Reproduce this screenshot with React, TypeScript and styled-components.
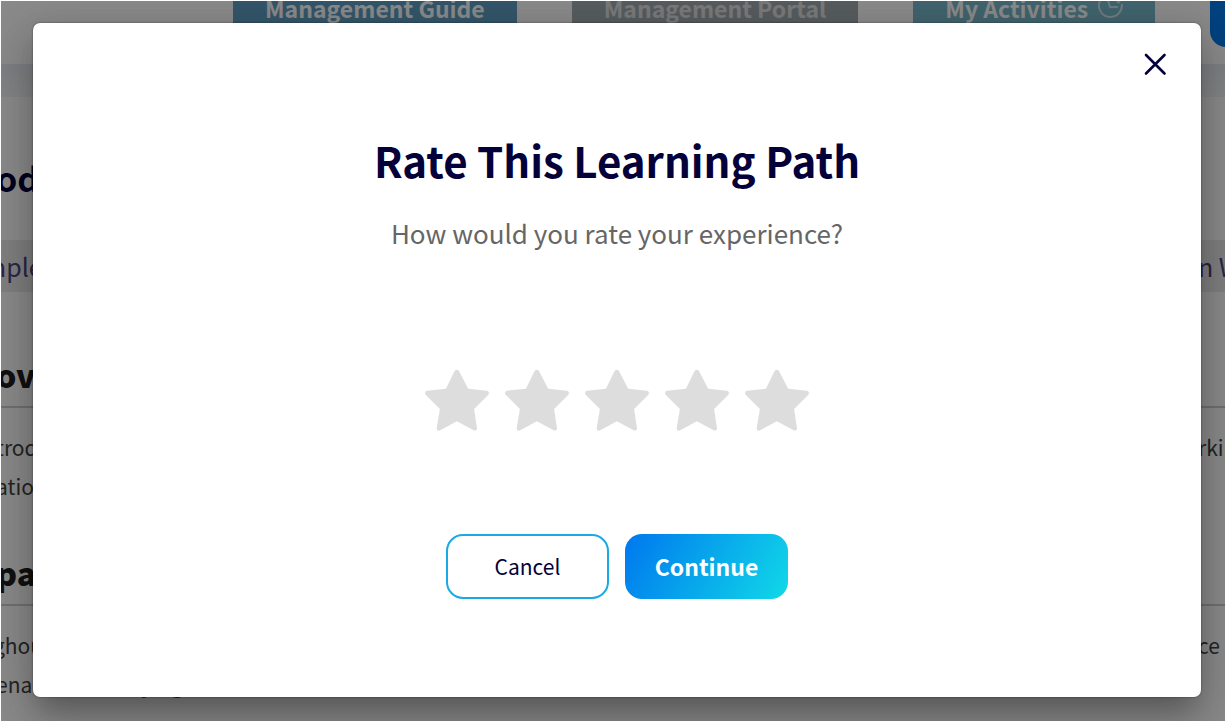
import React, { useState } from "react";
import styled, { createGlobalStyle } from "styled-components";

const GlobalStyle = createGlobalStyle`
  *, *::before, *::after { box-sizing: border-box; }
  body {
    margin: 0;
    background: #fff;
    font-family: "Noto Sans CJK SC", "Open Sans", sans-serif;
  }
  button { font-family: inherit; border: 0; cursor: pointer; }
  h1, h2, p { margin: 0; }
`;

const Frame = styled.div`
  height: 100vh;
  padding: 1px;
`;

const Screen = styled.div`
  position: relative;
  height: 100%;
  overflow: hidden;
  background: #fff;
`;

const Header = styled.header`
  display: flex;
  align-items: flex-end;
  gap: 55px;
  height: 63px;
  padding: 0 0 17px 232px;
  overflow: hidden;
`;

const NavButton = styled.button<{ $bg: string; $fg?: string; $round?: boolean }>`
  flex: none;
  display: flex;
  align-items: center;
  gap: 10px;
  height: 76px;
  padding: 0 32px 2px;
  border-radius: ${(p) => (p.$round ? "16px" : "0")};
  background: ${(p) => p.$bg};
  color: ${(p) => p.$fg ?? "#fff"};
  font-size: 23px;
  font-weight: 700;
  line-height: 36px;
  white-space: nowrap;
`;

const Band = styled.div`
  height: 33px;
  background: linear-gradient(#e6ecf2, #f2f5f5);
`;

const CourseTitle = styled.div`
  display: flex;
  align-items: center;
  height: 143px;
  padding-top: 18px;
  color: #03003a;
  font-size: 34px;
  font-weight: 700;
  line-height: 48px;
`;

const Tabs = styled.div`
  display: flex;
  align-items: center;
  justify-content: space-between;
  height: 52px;
  margin-bottom: 60px;
  background: #eaeaea;
  color: #4c4880;
  font-size: 25px;
  line-height: 40px;
`;

const Section = styled.section`
  height: 198px;
`;

const SectionTitle = styled.h2`
  display: flex;
  height: 56px;
  border-bottom: 2px solid #cfcfcf;
  color: #202020;
  font-size: 32px;
  font-weight: 900;
  line-height: 44px;
`;

const Copy = styled.div`
  padding-top: 20px;
  color: #444;
  font-size: 21px;
  line-height: 39px;
`;

const Line = styled.p`
  display: flex;
  justify-content: space-between;
`;

/* Text running past the left edge of the window. */
const Leading = styled.span<{ $shift: number }>`
  margin-left: -${(p) => p.$shift}px;
  white-space: nowrap;
`;

/* Text running past the right edge of the window. */
const Trailing = styled.span`
  width: 27px;
  overflow: hidden;
  white-space: nowrap;
`;

const Backdrop = styled.div`
  position: absolute;
  inset: 0;
  display: flex;
  padding: 22px 24px 24px 32px;
  background: rgba(0, 0, 0, 0.46);
`;

const Dialog = styled.div`
  position: relative;
  flex: 1;
  display: flex;
  flex-direction: column;
  align-items: center;
  padding-top: 107px;
  border-radius: 7px;
  background: #fff;
  box-shadow: 0 0 2px rgba(0, 0, 0, 0.5), 0 18px 24px -11px rgba(0, 0, 0, 0.2),
    0 24px 38px 3px rgba(0, 0, 0, 0.14), 0 9px 46px 8px rgba(0, 0, 0, 0.12);
`;

const CloseButton = styled.button`
  position: absolute;
  top: 25px;
  right: 30px;
  display: flex;
  padding: 4px;
  background: none;
  color: #03003a;
`;

const DialogTitle = styled.h1`
  color: #03003a;
  font-size: 42px;
  font-weight: 700;
  line-height: 60px;
`;

const Question = styled.p`
  margin-top: 23px;
  color: #666;
  font-size: 26px;
  line-height: 40px;
`;

const Stars = styled.fieldset`
  display: flex;
  gap: 16px;
  margin: 116px 0 0;
  padding: 0;
  border: 0;
`;

const StarLabel = styled.label<{ $on: boolean }>`
  position: relative;
  display: flex;
  color: ${(p) => (p.$on ? "#f5b301" : "#dddddd")};
  cursor: pointer;
`;

const StarInput = styled.input`
  position: absolute;
  inset: 0;
  margin: 0;
  opacity: 0;
`;

const Actions = styled.div`
  display: flex;
  gap: 16px;
  margin-top: 102px;
`;

const ActionButton = styled.button<{ $primary?: boolean }>`
  width: 163px;
  height: 65px;
  padding: 0 0 2px;
  border-radius: 17px;
  border: ${(p) => (p.$primary ? "0" : "2px solid #1ba9e6")};
  background: ${(p) =>
    p.$primary ? "linear-gradient(120deg, #007cee 5%, #10d5e8 96%)" : "#fff"};
  color: ${(p) => (p.$primary ? "#fff" : "#03003a")};
  font-size: ${(p) => (p.$primary ? "23px" : "21px")};
  font-weight: ${(p) => (p.$primary ? 700 : 400)};
  line-height: 36px;
`;

const ClockIcon = () => (
  <svg width="25" height="32" viewBox="0 0 25 32" fill="none" stroke="currentColor" strokeWidth="2" opacity="0.6" aria-hidden="true">
    <path d="M16.5 2.7A11.5 11.5 0 1 0 23.8 12" />
    <path d="M9 5l3 10h8" />
    <circle cx="20.5" cy="9.5" r="2" fill="currentColor" stroke="none" />
  </svg>
);

const StarIcon = () => (
  <svg width="64" height="63" viewBox="0 0 193 187" fill="currentColor" aria-hidden="true">
    <path d="M89 5Q96-3 103 5L130 58L187 64Q196 67 191 76L148 119L157 178Q156 186 148 184L96 156L45 184Q36 187 35 178L45 119L2 76Q-3 67 6 64L63 58Z" />
  </svg>
);

export default function App() {
  const [rating, setRating] = useState(0);
  return (
    <Frame>
      <GlobalStyle />
      <Screen>
        <Header>
          <NavButton $bg="#609fc4">Management Guide</NavButton>
          <NavButton $bg="#a1acb0" $fg="#e2e2e2">Management Portal</NavButton>
          <NavButton $bg="#78b9cc">
            My Activities
            <ClockIcon />
          </NavButton>
          <NavButton $bg="#007aeb" $round aria-label="Account" />
        </Header>
        <Band />
        <CourseTitle>
          <Leading $shift={5}>od</Leading>
        </CourseTitle>
        <Tabs>
          <Leading $shift={18}>mple</Leading>
          <Trailing>n W</Trailing>
        </Tabs>
        <Section>
          <SectionTitle>
            <Leading $shift={5}>ov</Leading>
          </SectionTitle>
          <Copy>
            <Line>
              <Leading $shift={5}>trod</Leading>
              <Trailing>rking</Trailing>
            </Line>
            <Line>
              <Leading $shift={5}>ation</Leading>
            </Line>
          </Copy>
        </Section>
        <Section>
          <SectionTitle>
            <Leading $shift={5}>pa</Leading>
          </SectionTitle>
          <Copy>
            <Line>
              <Leading $shift={8}>ghou</Leading>
              <Trailing>ce of</Trailing>
            </Line>
            <Line>
              <Leading $shift={5}>enance, identifying</Leading>
            </Line>
          </Copy>
        </Section>
        <Backdrop>
          <Dialog role="dialog" aria-modal="true" aria-labelledby="rate-title">
            <CloseButton type="button" aria-label="Close">
              <svg width="24" height="24" viewBox="0 0 24 24" stroke="currentColor" strokeWidth="2.6" strokeLinecap="round" aria-hidden="true">
                <path d="M3 3l18.500 18.500M21.500 3l-18.500 18.500" />
              </svg>
            </CloseButton>
            <DialogTitle id="rate-title">Rate This Learning Path</DialogTitle>
            <Question id="rate-question">How would you rate your experience?</Question>
            <Stars aria-labelledby="rate-question">
              {[1, 2, 3, 4, 5].map((n) => (
                <StarLabel key={n} $on={n <= rating}>
                  <StarInput
                    type="radio"
                    name="rating"
                    value={n}
                    aria-label={`${n} of 5`}
                    checked={rating === n}
                    onChange={() => setRating(n)}
                  />
                  <StarIcon />
                </StarLabel>
              ))}
            </Stars>
            <Actions>
              <ActionButton type="button">Cancel</ActionButton>
              <ActionButton type="button" $primary>Continue</ActionButton>
            </Actions>
          </Dialog>
        </Backdrop>
      </Screen>
    </Frame>
  );
}
